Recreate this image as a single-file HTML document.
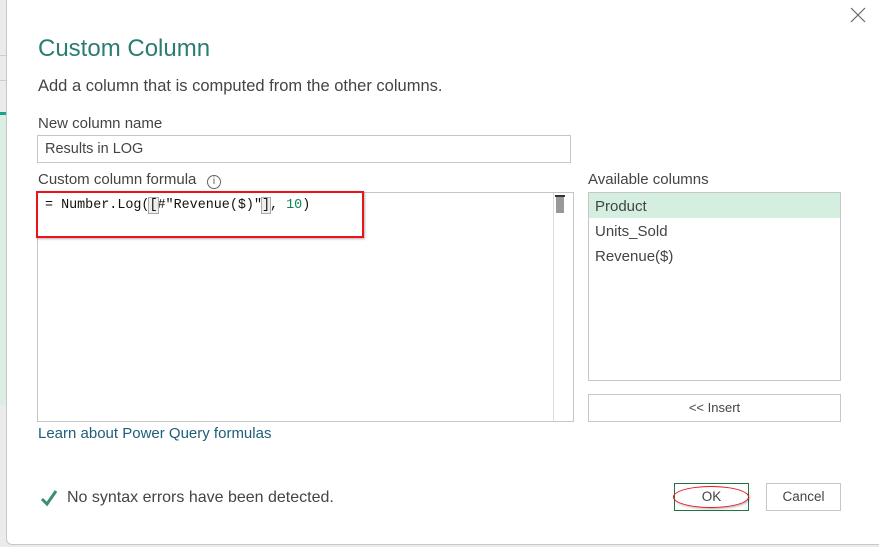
<!DOCTYPE html>
<html><head><meta charset="utf-8"><style>
*{margin:0;padding:0;box-sizing:border-box}
body{width:879px;height:547px;overflow:hidden;background:#e9ece9;font-family:"Liberation Sans",sans-serif;position:relative;color:#333}
.dlg{position:absolute;left:6px;top:0;width:873px;height:545px;background:#fff;border-left:1px solid #c8c8c8;border-bottom:1px solid #c8c8c8;border-radius:0 0 0 6px}
.a{position:absolute;white-space:nowrap}
.box{position:absolute;border:1px solid #c6c6c6;background:#fff}
</style></head><body>
<div style="position:absolute;left:0;top:55px;width:6px;height:1px;background:#ccc"></div>
<div style="position:absolute;left:0;top:80px;width:6px;height:1px;background:#ccc"></div>
<div style="position:absolute;left:0;top:112px;width:6px;height:3px;background:#1aa38a"></div>
<div style="position:absolute;left:0;top:115px;width:6px;height:290px;background:#dbeee3"></div>
<div class="dlg"></div>
<svg class="a" style="left:850px;top:7px" width="16" height="16"><path d="M1 1L15 15M15 1L1 15" stroke="#666" stroke-width="1.2"/></svg>
<div class="a" style="left:38px;top:35px;font-size:24px;color:#2b7c72">Custom Column</div>
<div class="a" style="left:38px;top:77px;font-size:16.5px;color:#444">Add a column that is computed from the other columns.</div>
<div class="a" style="left:38px;top:115px;font-size:15px;color:#444">New column name</div>
<div class="box" style="left:37px;top:135px;width:534px;height:28px"></div>
<div class="a" style="left:45px;top:141px;font-size:14.5px;color:#444">Results in LOG</div>
<div class="a" style="left:38px;top:171px;font-size:15px;color:#444">Custom column formula</div>
<div class="a" style="left:207px;top:175px;width:14px;height:14px;border:1px solid #666;border-radius:50%;font-size:10px;text-align:center;line-height:12px;color:#555">i</div>
<div class="box" style="left:37px;top:192px;width:537px;height:230px"></div>
<div class="a" style="left:553px;top:193px;width:1px;height:228px;background:#ddd"></div>
<div class="a" style="left:555px;top:195px;width:10px;height:2px;background:#333"></div>
<div class="a" style="left:556px;top:197px;width:8px;height:16px;background:#999"></div>
<div class="a" style="left:45px;top:198px;font-family:'Liberation Mono',monospace;font-size:13.4px;color:#111">= Number.Log(<span style="outline:1px solid #aaa;background:#eee">[</span>#"Revenue($)"<span style="outline:1px solid #aaa;background:#eee">]</span>, <span style="color:#098658">10</span>)</div>
<div class="a" style="left:36px;top:191px;width:328px;height:47px;border:2px solid #e8141c;box-shadow:1px 1px 2px rgba(0,0,0,.3)"></div>
<div class="a" style="left:588px;top:171px;font-size:15px;color:#444">Available columns</div>
<div class="box" style="left:588px;top:192px;width:253px;height:189px"></div>
<div class="a" style="left:589px;top:193px;width:251px;height:25px;background:#d4eee0"></div>
<div class="a" style="left:595px;top:198px;font-size:15px;color:#444">Product</div>
<div class="a" style="left:595px;top:223px;font-size:15px;color:#444">Units_Sold</div>
<div class="a" style="left:595px;top:248px;font-size:15px;color:#444">Revenue($)</div>
<div class="box" style="left:588px;top:394px;width:253px;height:28px;text-align:center;font-size:13px;line-height:26px;color:#444">&lt;&lt; Insert</div>
<div class="a" style="left:38px;top:425px;font-size:15px;color:#1f5d7a">Learn about Power Query formulas</div>
<svg class="a" style="left:40px;top:489px" width="18" height="18"><path d="M2 10L7 15L16 2" stroke="#3b8f6e" stroke-width="3" fill="none"/></svg>
<div class="a" style="left:67px;top:489px;font-size:16px;color:#444">No syntax errors have been detected.</div>
<div class="box" style="left:674px;top:483px;width:75px;height:28px;border-color:#217346;text-align:center;font-size:13.5px;line-height:26px;color:#444">OK</div>
<div class="a" style="left:673px;top:486px;width:76px;height:22px;border:1.5px solid #e8141c;border-radius:50%;box-shadow:1px 1px 2px rgba(0,0,0,.3)"></div>
<div class="box" style="left:766px;top:483px;width:75px;height:28px;text-align:center;font-size:13.5px;line-height:26px;color:#444">Cancel</div>
</body></html>
